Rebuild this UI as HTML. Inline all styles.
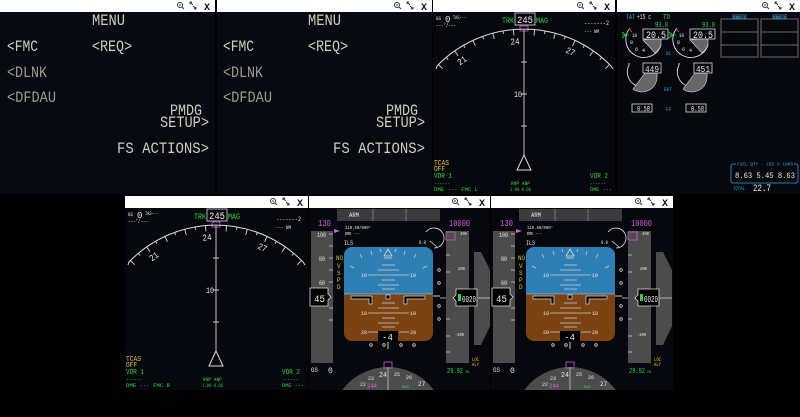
<!DOCTYPE html>
<html><head><meta charset="utf-8"><style>
html,body{margin:0;padding:0;background:#000;width:800px;height:417px;overflow:hidden}
svg{display:block;position:absolute;left:0;top:0}
text{font-family:"Liberation Mono","DejaVu Sans Mono",monospace}
.m{fill:#cfcdbc;font-size:16px}
.d{fill:#9d9b8e;font-size:16px}
.w{fill:#e8e8e8}
.g{fill:#2fd24a}
.y{fill:#e6c21e}
.c{fill:#2aa6d8}
.p{fill:#d060d8}
</style></head><body>
<svg width="800" height="417" viewBox="0 0 800 417" xmlns="http://www.w3.org/2000/svg">
<rect width="800" height="417" fill="#000"/>

<rect x="0" y="12" width="215" height="182" fill="#070911"/>
<rect x="217" y="12" width="215" height="182" fill="#070911"/>
<rect x="433" y="12" width="182" height="182" fill="#06080d"/>
<rect x="617" y="12" width="183" height="182" fill="#06080d"/>

<rect x="0" y="0" width="215" height="12" fill="#fff"/>
<rect x="217" y="0" width="215" height="12" fill="#fff"/>
<rect x="433" y="0" width="182" height="12" fill="#fff"/>
<rect x="617" y="0" width="183" height="12" fill="#fff"/>
<rect x="125" y="196" width="183" height="12" fill="#fff"/>
<rect x="309" y="196" width="181" height="12" fill="#fff"/>
<rect x="491" y="196" width="182" height="12" fill="#fff"/>

<g fill="none" stroke="#333" stroke-width="1">
 <circle cx="180" cy="5" r="2.5"/><line x1="182" y1="7" x2="184" y2="9"/><line x1="179" y1="5" x2="181" y2="5"/>
 <path d="M190,2 L193,5 M190,2 L190,4 M190,2 L192,2 M196,9 L193,6 M196,9 L196,7 M196,9 L194,9"/>
 <circle cx="397" cy="5" r="2.5"/><line x1="399" y1="7" x2="401" y2="9"/><line x1="396" y1="5" x2="398" y2="5"/>
 <path d="M407,2 L410,5 M407,2 L407,4 M407,2 L409,2 M413,9 L410,6 M413,9 L413,7 M413,9 L411,9"/>
 <circle cx="580" cy="5" r="2.5"/><line x1="582" y1="7" x2="584" y2="9"/><line x1="579" y1="5" x2="581" y2="5"/>
 <path d="M590,2 L593,5 M590,2 L590,4 M590,2 L592,2 M596,9 L593,6 M596,9 L596,7 M596,9 L594,9"/>
 <circle cx="765" cy="5" r="2.5"/><line x1="767" y1="7" x2="769" y2="9"/><line x1="764" y1="5" x2="766" y2="5"/>
 <path d="M775,2 L778,5 M775,2 L775,4 M775,2 L777,2 M781,9 L778,6 M781,9 L781,7 M781,9 L779,9"/>
 <circle cx="273" cy="201" r="2.5"/><line x1="275" y1="203" x2="277" y2="205"/><line x1="272" y1="201" x2="274" y2="201"/>
 <path d="M283,198 L286,201 M283,198 L283,200 M283,198 L285,198 M289,205 L286,202 M289,205 L289,203 M289,205 L287,205"/>
 <circle cx="455" cy="201" r="2.5"/><line x1="457" y1="203" x2="459" y2="205"/><line x1="454" y1="201" x2="456" y2="201"/>
 <path d="M465,198 L468,201 M465,198 L465,200 M465,198 L467,198 M471,205 L468,202 M471,205 L471,203 M471,205 L469,205"/>
 <circle cx="638" cy="201" r="2.5"/><line x1="640" y1="203" x2="642" y2="205"/><line x1="637" y1="201" x2="639" y2="201"/>
 <path d="M648,198 L651,201 M648,198 L648,200 M648,198 L650,198 M654,205 L651,202 M654,205 L654,203 M654,205 L652,205"/>
</g>
<g fill="#111" font-weight="bold" font-size="10" style="font-family:'Liberation Sans',sans-serif">
 <text x="204" y="10">X</text><text x="421" y="10">X</text><text x="604" y="10">X</text><text x="789" y="10">X</text>
 <text x="297" y="206">X</text><text x="479" y="206">X</text><text x="662" y="206">X</text>
</g>

<!-- MENU panels -->
<g>
 <text class="m" x="92" y="25" textLength="33" lengthAdjust="spacingAndGlyphs">MENU</text>
 <text class="m" x="7" y="51" textLength="31" lengthAdjust="spacingAndGlyphs">&lt;FMC</text>
 <text class="m" x="92" y="51" textLength="40" lengthAdjust="spacingAndGlyphs">&lt;REQ&gt;</text>
 <text class="d" x="7" y="77" textLength="40" lengthAdjust="spacingAndGlyphs">&lt;DLNK</text>
 <text class="d" x="7" y="102" textLength="49" lengthAdjust="spacingAndGlyphs">&lt;DFDAU</text>
 <text class="m" x="170" y="115" font-size="11" textLength="32" lengthAdjust="spacingAndGlyphs">PMDG</text>
 <text class="m" x="160" y="127" textLength="49" lengthAdjust="spacingAndGlyphs">SETUP&gt;</text>
 <text class="m" x="117" y="153" textLength="92" lengthAdjust="spacingAndGlyphs">FS ACTIONS&gt;</text>
</g>
<g>
 <text class="m" x="308" y="25" textLength="33" lengthAdjust="spacingAndGlyphs">MENU</text>
 <text class="m" x="223" y="51" textLength="31" lengthAdjust="spacingAndGlyphs">&lt;FMC</text>
 <text class="m" x="308" y="51" textLength="40" lengthAdjust="spacingAndGlyphs">&lt;REQ&gt;</text>
 <text class="d" x="223" y="77" textLength="40" lengthAdjust="spacingAndGlyphs">&lt;DLNK</text>
 <text class="d" x="223" y="102" textLength="49" lengthAdjust="spacingAndGlyphs">&lt;DFDAU</text>
 <text class="m" x="386" y="115" font-size="11" textLength="32" lengthAdjust="spacingAndGlyphs">PMDG</text>
 <text class="m" x="376" y="127" textLength="49" lengthAdjust="spacingAndGlyphs">SETUP&gt;</text>
 <text class="m" x="333" y="153" textLength="92" lengthAdjust="spacingAndGlyphs">FS ACTIONS&gt;</text>
</g>

<!-- ND top -->
<g>
 <text class="w" x="436" y="20" font-size="5" textLength="5" lengthAdjust="spacingAndGlyphs">GS</text>
 <text class="w" x="445" y="22" font-size="9">0</text>
 <text class="w" x="453" y="19" font-size="5" textLength="13" lengthAdjust="spacingAndGlyphs">TAS---</text>
 <text class="w" x="436" y="27" font-size="6" textLength="20" lengthAdjust="spacingAndGlyphs">---°/---</text>
 <text class="g" x="502" y="23" font-size="8" textLength="12" lengthAdjust="spacingAndGlyphs">TRK</text>
 <rect x="515" y="13" width="20" height="12" fill="none" stroke="#ddd" stroke-width="0.8"/>
 <text class="w" x="517" y="23" font-size="10" textLength="16" lengthAdjust="spacingAndGlyphs">245</text>
 <text class="g" x="536" y="23" font-size="8" textLength="12" lengthAdjust="spacingAndGlyphs">MAG</text>
 <rect x="520" y="26" width="8" height="5" fill="none" stroke="#c050d0" stroke-width="0.8"/>
 <text class="w" x="584" y="25" font-size="6" textLength="25" lengthAdjust="spacingAndGlyphs">-------2</text>
 <text class="w" x="584" y="33" font-size="5" textLength="15" lengthAdjust="spacingAndGlyphs">--- NM</text>
 <path d="M436,69 L437,66 A121,121 0 0 1 611,66 L613,69" fill="none" stroke="#ddd" stroke-width="1"/>
 <g stroke="#ddd" stroke-width="0.9">
  <line x1="524" y1="29" x2="524" y2="35" transform="rotate(-45 524 150)"/>
  <line x1="524" y1="29" x2="524" y2="32" transform="rotate(-40 524 150)"/>
  <line x1="524" y1="29" x2="524" y2="35" transform="rotate(-35 524 150)"/>
  <line x1="524" y1="29" x2="524" y2="32" transform="rotate(-30 524 150)"/>
  <line x1="524" y1="29" x2="524" y2="35" transform="rotate(-25 524 150)"/>
  <line x1="524" y1="29" x2="524" y2="32" transform="rotate(-20 524 150)"/>
  <line x1="524" y1="29" x2="524" y2="35" transform="rotate(-15 524 150)"/>
  <line x1="524" y1="29" x2="524" y2="32" transform="rotate(-10 524 150)"/>
  <line x1="524" y1="29" x2="524" y2="35" transform="rotate(-5 524 150)"/>
  <line x1="524" y1="29" x2="524" y2="35" transform="rotate(5 524 150)"/>
  <line x1="524" y1="29" x2="524" y2="32" transform="rotate(10 524 150)"/>
  <line x1="524" y1="29" x2="524" y2="35" transform="rotate(15 524 150)"/>
  <line x1="524" y1="29" x2="524" y2="32" transform="rotate(20 524 150)"/>
  <line x1="524" y1="29" x2="524" y2="35" transform="rotate(25 524 150)"/>
  <line x1="524" y1="29" x2="524" y2="32" transform="rotate(30 524 150)"/>
  <line x1="524" y1="29" x2="524" y2="35" transform="rotate(35 524 150)"/>
  <line x1="524" y1="29" x2="524" y2="32" transform="rotate(40 524 150)"/>
  <line x1="524" y1="29" x2="524" y2="35" transform="rotate(45 524 150)"/>
 </g>
 <text class="w" x="520" y="44" font-size="9" textLength="9" lengthAdjust="spacingAndGlyphs" transform="rotate(-5 524 150)">24</text>
 <text class="w" x="520" y="44" font-size="9" textLength="9" lengthAdjust="spacingAndGlyphs" transform="rotate(-35 524 150)">21</text>
 <text class="w" x="520" y="44" font-size="9" textLength="9" lengthAdjust="spacingAndGlyphs" transform="rotate(25 524 150)">27</text>
 <line x1="524" y1="30" x2="524" y2="156" stroke="#c8b8c8" stroke-width="1"/>
 <line x1="521" y1="62" x2="527" y2="62" stroke="#ccc"/>
 <line x1="521" y1="94" x2="527" y2="94" stroke="#ccc"/>
 <line x1="521" y1="126" x2="527" y2="126" stroke="#ccc"/>
 <text class="w" x="514" y="97" font-size="8" textLength="8" lengthAdjust="spacingAndGlyphs">10</text>
 <path d="M524,155 L517,170 L531,170 Z" fill="none" stroke="#ddd" stroke-width="1"/>
 <text class="y" x="434" y="165" font-size="7" textLength="15" lengthAdjust="spacingAndGlyphs">TCAS</text>
 <text class="y" x="434" y="171" font-size="7" textLength="11" lengthAdjust="spacingAndGlyphs">OFF</text>
 <text class="g" x="434" y="178" font-size="7" textLength="18" lengthAdjust="spacingAndGlyphs">VOR 1</text>
 <text class="g" x="434" y="185" font-size="5" textLength="16" lengthAdjust="spacingAndGlyphs">------</text>
 <text class="g" x="434" y="191" font-size="5" textLength="44" lengthAdjust="spacingAndGlyphs">DME ---  FMC L</text>
 <text class="g" x="511" y="185" font-size="5" textLength="19" lengthAdjust="spacingAndGlyphs">RNP  ANP</text>
 <text class="g" x="510" y="191" font-size="5" textLength="21" lengthAdjust="spacingAndGlyphs">1.00  0.06</text>
 <text class="g" x="590" y="178" font-size="7" textLength="18" lengthAdjust="spacingAndGlyphs">VOR 2</text>
 <text class="g" x="590" y="185" font-size="5" textLength="16" lengthAdjust="spacingAndGlyphs">------</text>
 <text class="g" x="590" y="191" font-size="5" textLength="22" lengthAdjust="spacingAndGlyphs">DME ---</text>
</g>

<!-- ND bottom -->
<rect x="125" y="208" width="183" height="182" fill="#06080d"/>
<g transform="translate(-308,196)">
 <text class="w" x="436" y="20" font-size="5" textLength="5" lengthAdjust="spacingAndGlyphs">GS</text>
 <text class="w" x="445" y="22" font-size="9">0</text>
 <text class="w" x="453" y="19" font-size="5" textLength="13" lengthAdjust="spacingAndGlyphs">TAS---</text>
 <text class="w" x="436" y="27" font-size="6" textLength="20" lengthAdjust="spacingAndGlyphs">---°/---</text>
 <text class="g" x="502" y="23" font-size="8" textLength="12" lengthAdjust="spacingAndGlyphs">TRK</text>
 <rect x="515" y="13" width="20" height="12" fill="none" stroke="#ddd" stroke-width="0.8"/>
 <text class="w" x="517" y="23" font-size="10" textLength="16" lengthAdjust="spacingAndGlyphs">245</text>
 <text class="g" x="536" y="23" font-size="8" textLength="12" lengthAdjust="spacingAndGlyphs">MAG</text>
 <rect x="520" y="26" width="8" height="5" fill="none" stroke="#c050d0" stroke-width="0.8"/>
 <text class="w" x="584" y="25" font-size="6" textLength="25" lengthAdjust="spacingAndGlyphs">-------2</text>
 <text class="w" x="584" y="33" font-size="5" textLength="15" lengthAdjust="spacingAndGlyphs">--- NM</text>
 <path d="M436,69 L437,66 A121,121 0 0 1 611,66 L613,69" fill="none" stroke="#ddd" stroke-width="1"/>
 <g stroke="#ddd" stroke-width="0.9">
  <line x1="524" y1="29" x2="524" y2="35" transform="rotate(-45 524 150)"/>
  <line x1="524" y1="29" x2="524" y2="32" transform="rotate(-40 524 150)"/>
  <line x1="524" y1="29" x2="524" y2="35" transform="rotate(-35 524 150)"/>
  <line x1="524" y1="29" x2="524" y2="32" transform="rotate(-30 524 150)"/>
  <line x1="524" y1="29" x2="524" y2="35" transform="rotate(-25 524 150)"/>
  <line x1="524" y1="29" x2="524" y2="32" transform="rotate(-20 524 150)"/>
  <line x1="524" y1="29" x2="524" y2="35" transform="rotate(-15 524 150)"/>
  <line x1="524" y1="29" x2="524" y2="32" transform="rotate(-10 524 150)"/>
  <line x1="524" y1="29" x2="524" y2="35" transform="rotate(-5 524 150)"/>
  <line x1="524" y1="29" x2="524" y2="35" transform="rotate(5 524 150)"/>
  <line x1="524" y1="29" x2="524" y2="32" transform="rotate(10 524 150)"/>
  <line x1="524" y1="29" x2="524" y2="35" transform="rotate(15 524 150)"/>
  <line x1="524" y1="29" x2="524" y2="32" transform="rotate(20 524 150)"/>
  <line x1="524" y1="29" x2="524" y2="35" transform="rotate(25 524 150)"/>
  <line x1="524" y1="29" x2="524" y2="32" transform="rotate(30 524 150)"/>
  <line x1="524" y1="29" x2="524" y2="35" transform="rotate(35 524 150)"/>
  <line x1="524" y1="29" x2="524" y2="32" transform="rotate(40 524 150)"/>
  <line x1="524" y1="29" x2="524" y2="35" transform="rotate(45 524 150)"/>
 </g>
 <text class="w" x="520" y="44" font-size="9" textLength="9" lengthAdjust="spacingAndGlyphs" transform="rotate(-5 524 150)">24</text>
 <text class="w" x="520" y="44" font-size="9" textLength="9" lengthAdjust="spacingAndGlyphs" transform="rotate(-35 524 150)">21</text>
 <text class="w" x="520" y="44" font-size="9" textLength="9" lengthAdjust="spacingAndGlyphs" transform="rotate(25 524 150)">27</text>
 <line x1="524" y1="30" x2="524" y2="156" stroke="#c8b8c8" stroke-width="1"/>
 <line x1="521" y1="62" x2="527" y2="62" stroke="#ccc"/>
 <line x1="521" y1="94" x2="527" y2="94" stroke="#ccc"/>
 <line x1="521" y1="126" x2="527" y2="126" stroke="#ccc"/>
 <text class="w" x="514" y="97" font-size="8" textLength="8" lengthAdjust="spacingAndGlyphs">10</text>
 <path d="M524,155 L517,170 L531,170 Z" fill="none" stroke="#ddd" stroke-width="1"/>
 <text class="y" x="434" y="165" font-size="7" textLength="15" lengthAdjust="spacingAndGlyphs">TCAS</text>
 <text class="y" x="434" y="171" font-size="7" textLength="11" lengthAdjust="spacingAndGlyphs">OFF</text>
 <text class="g" x="434" y="178" font-size="7" textLength="18" lengthAdjust="spacingAndGlyphs">VOR 1</text>
 <text class="g" x="434" y="185" font-size="5" textLength="16" lengthAdjust="spacingAndGlyphs">------</text>
 <text class="g" x="434" y="191" font-size="5" textLength="44" lengthAdjust="spacingAndGlyphs">DME ---  FMC R</text>
 <text class="g" x="511" y="185" font-size="5" textLength="19" lengthAdjust="spacingAndGlyphs">RNP  ANP</text>
 <text class="g" x="510" y="191" font-size="5" textLength="21" lengthAdjust="spacingAndGlyphs">1.00  0.06</text>
 <text class="g" x="590" y="178" font-size="7" textLength="18" lengthAdjust="spacingAndGlyphs">VOR 2</text>
 <text class="g" x="590" y="185" font-size="5" textLength="16" lengthAdjust="spacingAndGlyphs">------</text>
 <text class="g" x="590" y="191" font-size="5" textLength="22" lengthAdjust="spacingAndGlyphs">DME ---</text>
</g>

<!-- EICAS -->
<g>
 <text class="c" x="626" y="19" font-size="6" textLength="9" lengthAdjust="spacingAndGlyphs">TAT</text>
 <text class="w" x="637" y="19" font-size="7" textLength="14" lengthAdjust="spacingAndGlyphs">+15 c</text>
 <text class="g" x="663" y="19" font-size="7" textLength="7" lengthAdjust="spacingAndGlyphs">TO</text>
 <g fill="none" stroke="#ddd" stroke-width="0.9">
  <path d="M630,28 A18,18 0 1 0 661,45"/>
  <path d="M677,28 A18,18 0 1 0 708,45"/>
 </g>
 <path d="M643,40 L661,38 L661,45 A18,18 0 0 1 655,53 Z" fill="#666" stroke="#ddd" stroke-width="0.6"/>
 <path d="M690,40 L708,38 L708,45 A18,18 0 0 1 702,53 Z" fill="#666" stroke="#ddd" stroke-width="0.6"/>
 <rect x="643" y="29" width="25" height="10" fill="#06080d" stroke="#ddd" stroke-width="0.8"/>
 <rect x="690" y="29" width="25" height="10" fill="#06080d" stroke="#ddd" stroke-width="0.8"/>
 <text class="w" x="646" y="38" font-size="10" textLength="20" lengthAdjust="spacingAndGlyphs">20.5</text>
 <text class="w" x="693" y="38" font-size="10" textLength="20" lengthAdjust="spacingAndGlyphs">20.5</text>
 <text class="g" x="655" y="27" font-size="7" textLength="13" lengthAdjust="spacingAndGlyphs">93.8</text>
 <text class="g" x="702" y="27" font-size="7" textLength="13" lengthAdjust="spacingAndGlyphs">93.8</text>
 <path d="M622,35 L629,35 M622,32 L626,35 L622,38" stroke="#2fd24a" fill="none" stroke-width="0.8"/>
 <path d="M669,35 L676,35 M669,32 L673,35 L669,38" stroke="#2fd24a" fill="none" stroke-width="0.8"/>
 <line x1="629" y1="29" x2="632" y2="32" stroke="#e03030" stroke-width="1"/>
 <line x1="676" y1="29" x2="679" y2="32" stroke="#e03030" stroke-width="1"/>
 <text class="w" x="632" y="37" font-size="5" textLength="5" lengthAdjust="spacingAndGlyphs">10</text>
 <text class="w" x="679" y="37" font-size="5" textLength="5" lengthAdjust="spacingAndGlyphs">10</text>
 <text class="w" x="630" y="44" font-size="5">8</text><text class="w" x="677" y="44" font-size="5">8</text>
 <text class="w" x="635" y="51" font-size="5">6</text><text class="w" x="642" y="52" font-size="5">4</text>
 <text class="w" x="682" y="51" font-size="5">6</text><text class="w" x="689" y="52" font-size="5">4</text>
 <text class="c" x="666" y="55" font-size="5" textLength="5" lengthAdjust="spacingAndGlyphs">N1</text>
 <g fill="none" stroke="#ddd" stroke-width="0.9">
  <path d="M629,65 A15,15 0 1 0 657,75"/>
  <path d="M679,65 A15,15 0 1 0 707,75"/>
 </g>
 <path d="M633,89 L645,73 L657,73 L657,77 A15,15 0 0 1 633,89 Z" fill="#666" stroke="#ddd" stroke-width="0.6"/>
 <path d="M683,89 L695,73 L707,73 L707,77 A15,15 0 0 1 683,89 Z" fill="#666" stroke="#ddd" stroke-width="0.6"/>
 <rect x="643" y="63" width="18" height="10" fill="#06080d" stroke="#ddd" stroke-width="0.8"/>
 <rect x="694" y="63" width="18" height="10" fill="#06080d" stroke="#ddd" stroke-width="0.8"/>
 <text class="w" x="645" y="72" font-size="9" textLength="14" lengthAdjust="spacingAndGlyphs">449</text>
 <text class="w" x="696" y="72" font-size="9" textLength="14" lengthAdjust="spacingAndGlyphs">451</text>
 <circle cx="629" cy="64" r="1" fill="#e08020"/><circle cx="679" cy="64" r="1" fill="#e08020"/>
 <text class="c" x="664" y="91" font-size="5" textLength="8" lengthAdjust="spacingAndGlyphs">EGT</text>
 <rect x="632" y="104" width="20" height="8" fill="none" stroke="#ddd" stroke-width="0.8"/>
 <rect x="686" y="104" width="20" height="8" fill="none" stroke="#ddd" stroke-width="0.8"/>
 <text class="w" x="637" y="111" font-size="7" textLength="13" lengthAdjust="spacingAndGlyphs">0.58</text>
 <text class="w" x="691" y="111" font-size="7" textLength="13" lengthAdjust="spacingAndGlyphs">0.58</text>
 <text class="c" x="666" y="111" font-size="5" textLength="5" lengthAdjust="spacingAndGlyphs">FF</text>
 <rect x="732" y="14" width="15" height="5" fill="#1a3a55"/>
 <rect x="772" y="14" width="15" height="5" fill="#1a3a55"/>
 <text class="c" x="733" y="18.5" font-size="4" textLength="13" lengthAdjust="spacingAndGlyphs">ENG 1</text>
 <text class="c" x="773" y="18.5" font-size="4" textLength="13" lengthAdjust="spacingAndGlyphs">ENG 2</text>
 <g fill="none" stroke="#888" stroke-width="0.8">
  <rect x="721" y="19" width="37" height="38"/><line x1="721" y1="32" x2="758" y2="32"/><line x1="721" y1="45" x2="758" y2="45"/>
  <rect x="761" y="19" width="37" height="38"/><line x1="761" y1="32" x2="798" y2="32"/><line x1="761" y1="45" x2="798" y2="45"/>
 </g>
 <rect x="731" y="164" width="67" height="19" rx="2" fill="none" stroke="#2aa6d8" stroke-width="0.8"/>
 <rect x="736" y="161" width="58" height="5" fill="#06080d"/>
 <text class="c" x="737" y="165.5" font-size="4.5" textLength="56" lengthAdjust="spacingAndGlyphs">FUEL QTY - LBS X 1000</text>
 <text class="w" x="735" y="178" font-size="8" textLength="60" lengthAdjust="spacingAndGlyphs">8.63  5.45  8.63</text>
 <text class="c" x="733" y="190" font-size="5" textLength="12" lengthAdjust="spacingAndGlyphs">TOTAL</text>
 <text class="w" x="753" y="191" font-size="10" textLength="18" lengthAdjust="spacingAndGlyphs">22.7</text>
</g>

<!-- PFD 1 -->
<rect x="309" y="208" width="181" height="182" fill="#06080d"/>
<g>
 <rect x="337" y="209" width="103" height="12" fill="#3c3c3c"/>
 <line x1="373" y1="209" x2="373" y2="221" stroke="#999" stroke-width="0.6"/>
 <line x1="406" y1="209" x2="406" y2="221" stroke="#999" stroke-width="0.6"/>
 <text class="w" x="349" y="217" font-size="6" textLength="10" lengthAdjust="spacingAndGlyphs">ARM</text>
 <text class="p" x="318" y="226" font-size="9" textLength="13" lengthAdjust="spacingAndGlyphs">130</text>
 <rect x="311" y="231" width="22" height="132" fill="#4c4c4c"/>
 <g stroke="#ccc" stroke-width="0.8">
  <line x1="329" y1="234" x2="333" y2="234"/><line x1="329" y1="246" x2="333" y2="246"/>
  <line x1="329" y1="258" x2="333" y2="258"/><line x1="329" y1="270" x2="333" y2="270"/>
  <line x1="329" y1="282" x2="333" y2="282"/><line x1="329" y1="308" x2="333" y2="308"/>
  <line x1="329" y1="320" x2="333" y2="320"/>
 </g>
 <text class="w" x="317" y="237" font-size="6" textLength="9" lengthAdjust="spacingAndGlyphs">100</text>
 <text class="w" x="319" y="261" font-size="6" textLength="6" lengthAdjust="spacingAndGlyphs">80</text>
 <text class="w" x="319" y="285" font-size="6" textLength="6" lengthAdjust="spacingAndGlyphs">60</text>
 <path d="M334,229 L340,231 L334,233 Z" fill="#d060d8"/>
 <path d="M310,288 L328,288 L328,294 L331,297 L328,300 L328,306 L310,306 Z" fill="#000" stroke="#ddd" stroke-width="0.8"/>
 <text class="w" x="314" y="302" font-size="10" textLength="11" lengthAdjust="spacingAndGlyphs">45</text>
 <text class="y" x="336" y="260" font-size="6" textLength="7" lengthAdjust="spacingAndGlyphs">NO</text>
 <text class="y" x="337" y="268" font-size="6">V</text>
 <text class="y" x="337" y="275" font-size="6">S</text>
 <text class="y" x="337" y="282" font-size="6">P</text>
 <text class="y" x="337" y="289" font-size="6">D</text>
 <text class="w" x="345" y="229" font-size="4.5" textLength="26" lengthAdjust="spacingAndGlyphs">110.50/000°</text>
 <text class="w" x="345" y="235" font-size="4.5" textLength="15" lengthAdjust="spacingAndGlyphs">DME ---</text>
 <text class="w" x="344" y="245" font-size="6" textLength="9" lengthAdjust="spacingAndGlyphs">ILS</text>
 <path d="M426,232 A10,10 0 1 1 434,248" fill="none" stroke="#ddd" stroke-width="0.8"/>
 <line x1="430" y1="241" x2="437" y2="247" stroke="#ddd" stroke-width="0.8"/>
 <text class="w" x="419" y="244" font-size="5" textLength="7" lengthAdjust="spacingAndGlyphs">0.0</text>
 <clipPath id="att1"><rect x="344" y="247" width="89" height="94" rx="8"/></clipPath>
 <g clip-path="url(#att1)">
  <rect x="344" y="247" width="89" height="47" fill="#2e7fb4"/>
  <rect x="344" y="294" width="89" height="47" fill="#7b4212"/>
  <line x1="344" y1="294" x2="433" y2="294" stroke="#ccc" stroke-width="0.6"/>
 </g>
 <g stroke="#ccc" stroke-width="0.8">
  <line x1="368" y1="275" x2="409" y2="275"/>
  <line x1="382" y1="265" x2="395" y2="265"/><line x1="378" y1="270" x2="399" y2="270"/>
  <line x1="382" y1="280" x2="395" y2="280"/><line x1="378" y1="285" x2="399" y2="285"/>
  <line x1="382" y1="289" x2="395" y2="289"/>
  <line x1="382" y1="303" x2="395" y2="303"/><line x1="378" y1="308" x2="399" y2="308"/>
  <line x1="368" y1="313" x2="409" y2="313"/>
  <line x1="382" y1="318" x2="395" y2="318"/><line x1="378" y1="323" x2="399" y2="323"/>
  <line x1="382" y1="327" x2="395" y2="327"/>
  <line x1="368" y1="332" x2="378" y2="332"/><line x1="399" y1="332" x2="409" y2="332"/>
  <line x1="360" y1="254" x2="362" y2="258"/><line x1="371" y1="251" x2="372" y2="255"/>
  <line x1="380" y1="249" x2="381" y2="252"/><line x1="396" y1="249" x2="395" y2="252"/>
  <line x1="405" y1="251" x2="404" y2="255"/><line x1="416" y1="254" x2="414" y2="258"/>
  <line x1="350" y1="266" x2="354" y2="268"/><line x1="427" y1="266" x2="423" y2="268"/>
 </g>
 <path d="M384,256 L392,256 L388,249 Z M384,258 L392,258" fill="none" stroke="#ddd" stroke-width="0.8"/>
 <text class="w" x="361" y="277" font-size="5">10</text><text class="w" x="410" y="277" font-size="5">10</text>
 <text class="w" x="361" y="315" font-size="5">10</text><text class="w" x="410" y="315" font-size="5">10</text>
 <text class="w" x="361" y="334" font-size="5">20</text><text class="w" x="410" y="334" font-size="5">20</text>
 <path d="M351,296 L372,296 L372,304 L369,304 L369,299 L351,299 Z" fill="#000" stroke="#ddd" stroke-width="0.7"/>
 <path d="M425,296 L404,296 L404,304 L407,304 L407,299 L425,299 Z" fill="#000" stroke="#ddd" stroke-width="0.7"/>
 <rect x="386" y="295" width="4" height="4" fill="#000" stroke="#ddd" stroke-width="0.7"/>
 <rect x="378" y="331" width="20" height="11" fill="#000"/>
 <text class="w" x="382" y="340" font-size="9" textLength="11" lengthAdjust="spacingAndGlyphs">-4</text>
 <g fill="none" stroke="#ccc" stroke-width="0.8">
  <circle cx="439" cy="270" r="1.3"/><circle cx="439" cy="283" r="1.3"/><circle cx="439" cy="306" r="1.3"/><circle cx="439" cy="319" r="1.3"/>
  <circle cx="371" cy="345" r="1.3"/><circle cx="384" cy="345" r="1.3"/><circle cx="401" cy="345" r="1.3"/><circle cx="414" cy="345" r="1.3"/>
 </g>
 <line x1="388" y1="342" x2="388" y2="349" stroke="#ccc"/>
 <line x1="433" y1="296" x2="440" y2="296" stroke="#ccc"/>
 <text class="p" x="449" y="226" font-size="9" textLength="21" lengthAdjust="spacingAndGlyphs">10000</text>
 <rect x="446" y="231" width="23" height="132" fill="#4c4c4c"/>
 <path d="M446,232 L455,232 L455,240 L446,240 Z" fill="none" stroke="#d060d8" stroke-width="0.8"/>
 <g stroke="#ccc" stroke-width="0.8">
  <line x1="446" y1="255" x2="450" y2="255"/><line x1="446" y1="272" x2="450" y2="272"/>
  <line x1="446" y1="319" x2="450" y2="319"/><line x1="446" y1="336" x2="450" y2="336"/>
  <line x1="446" y1="352" x2="450" y2="352"/><line x1="440" y1="298" x2="446" y2="298"/>
 </g>
 <text class="w" x="460" y="235" font-size="4.5" textLength="7" lengthAdjust="spacingAndGlyphs">400</text>
 <text class="w" x="458" y="270" font-size="4.5" textLength="7" lengthAdjust="spacingAndGlyphs">200</text>
 <text class="w" x="455" y="336" font-size="4.5" textLength="9" lengthAdjust="spacingAndGlyphs">-200</text>
 <path d="M474,252 L481,252 L490,270 L490,326 L481,345 L474,345 Z" fill="#4c4c4c"/>
 <line x1="478" y1="298" x2="490" y2="298" stroke="#ccc" stroke-width="0.8"/>
 <path d="M456,289 L477,289 L477,306 L456,306 L456,301 L453,298 L456,295 Z" fill="#000" stroke="#ddd" stroke-width="0.8"/>
 <rect x="458" y="294" width="3" height="7" fill="#2fd24a"/>
 <text class="w" x="462" y="302" font-size="9" textLength="14" lengthAdjust="spacingAndGlyphs">0020</text>
 <text class="y" x="472" y="361" font-size="5" textLength="7" lengthAdjust="spacingAndGlyphs">LOC</text>
 <text class="y" x="472" y="366" font-size="5" textLength="7" lengthAdjust="spacingAndGlyphs">ALY</text>
 <text class="w" x="311" y="372" font-size="6" textLength="7" lengthAdjust="spacingAndGlyphs">GS</text>
 <text class="w" x="328" y="373" font-size="8">0</text>
 <text class="g" x="447" y="373" font-size="7" textLength="16" lengthAdjust="spacingAndGlyphs">29.92</text>
 <text class="g" x="465" y="373" font-size="4" textLength="6" lengthAdjust="spacingAndGlyphs">IN.</text>
 <clipPath id="cmp1"><rect x="309" y="360" width="181" height="30"/></clipPath>
 <circle cx="388" cy="424" r="57" fill="#4c4c4c" clip-path="url(#cmp1)"/>
 <line x1="388" y1="367" x2="388" y2="390" stroke="#ccc" stroke-width="0.8"/>
 <rect x="384" y="362" width="8" height="6" fill="none" stroke="#d060d8" stroke-width="0.8"/>
 <text class="w" x="379" y="377" font-size="7" textLength="8" lengthAdjust="spacingAndGlyphs">24</text>
 <text class="w" x="394" y="376" font-size="5">25</text>
 <text class="w" x="406" y="379" font-size="5">26</text>
 <text class="w" x="418" y="386" font-size="6">27</text>
 <text class="w" x="360" y="386" font-size="5">22</text>
 <text class="w" x="368" y="380" font-size="5">23</text>
 <text class="p" x="367" y="388" font-size="6" textLength="10" lengthAdjust="spacingAndGlyphs">244</text>
 <text class="g" x="402" y="388" font-size="4" textLength="7" lengthAdjust="spacingAndGlyphs">MAG</text>
</g>

<!-- PFD 2 -->
<rect x="491" y="208" width="182" height="182" fill="#06080d"/>
<g transform="translate(182,0)">
 <rect x="337" y="209" width="103" height="12" fill="#3c3c3c"/>
 <line x1="373" y1="209" x2="373" y2="221" stroke="#999" stroke-width="0.6"/>
 <line x1="406" y1="209" x2="406" y2="221" stroke="#999" stroke-width="0.6"/>
 <text class="w" x="349" y="217" font-size="6" textLength="10" lengthAdjust="spacingAndGlyphs">ARM</text>
 <text class="p" x="318" y="226" font-size="9" textLength="13" lengthAdjust="spacingAndGlyphs">130</text>
 <rect x="311" y="231" width="22" height="132" fill="#4c4c4c"/>
 <g stroke="#ccc" stroke-width="0.8">
  <line x1="329" y1="234" x2="333" y2="234"/><line x1="329" y1="246" x2="333" y2="246"/>
  <line x1="329" y1="258" x2="333" y2="258"/><line x1="329" y1="270" x2="333" y2="270"/>
  <line x1="329" y1="282" x2="333" y2="282"/><line x1="329" y1="308" x2="333" y2="308"/>
  <line x1="329" y1="320" x2="333" y2="320"/>
 </g>
 <text class="w" x="317" y="237" font-size="6" textLength="9" lengthAdjust="spacingAndGlyphs">100</text>
 <text class="w" x="319" y="261" font-size="6" textLength="6" lengthAdjust="spacingAndGlyphs">80</text>
 <text class="w" x="319" y="285" font-size="6" textLength="6" lengthAdjust="spacingAndGlyphs">60</text>
 <path d="M334,229 L340,231 L334,233 Z" fill="#d060d8"/>
 <path d="M310,288 L328,288 L328,294 L331,297 L328,300 L328,306 L310,306 Z" fill="#000" stroke="#ddd" stroke-width="0.8"/>
 <text class="w" x="314" y="302" font-size="10" textLength="11" lengthAdjust="spacingAndGlyphs">45</text>
 <text class="y" x="336" y="260" font-size="6" textLength="7" lengthAdjust="spacingAndGlyphs">NO</text>
 <text class="y" x="337" y="268" font-size="6">V</text>
 <text class="y" x="337" y="275" font-size="6">S</text>
 <text class="y" x="337" y="282" font-size="6">P</text>
 <text class="y" x="337" y="289" font-size="6">D</text>
 <text class="w" x="345" y="229" font-size="4.5" textLength="26" lengthAdjust="spacingAndGlyphs">110.50/000°</text>
 <text class="w" x="345" y="235" font-size="4.5" textLength="15" lengthAdjust="spacingAndGlyphs">DME ---</text>
 <text class="w" x="344" y="245" font-size="6" textLength="9" lengthAdjust="spacingAndGlyphs">ILS</text>
 <path d="M426,232 A10,10 0 1 1 434,248" fill="none" stroke="#ddd" stroke-width="0.8"/>
 <line x1="430" y1="241" x2="437" y2="247" stroke="#ddd" stroke-width="0.8"/>
 <text class="w" x="419" y="244" font-size="5" textLength="7" lengthAdjust="spacingAndGlyphs">0.0</text>
 <clipPath id="att2"><rect x="344" y="247" width="89" height="94" rx="8"/></clipPath>
 <g clip-path="url(#att2)">
  <rect x="344" y="247" width="89" height="47" fill="#2e7fb4"/>
  <rect x="344" y="294" width="89" height="47" fill="#7b4212"/>
  <line x1="344" y1="294" x2="433" y2="294" stroke="#ccc" stroke-width="0.6"/>
 </g>
 <g stroke="#ccc" stroke-width="0.8">
  <line x1="368" y1="275" x2="409" y2="275"/>
  <line x1="382" y1="265" x2="395" y2="265"/><line x1="378" y1="270" x2="399" y2="270"/>
  <line x1="382" y1="280" x2="395" y2="280"/><line x1="378" y1="285" x2="399" y2="285"/>
  <line x1="382" y1="289" x2="395" y2="289"/>
  <line x1="382" y1="303" x2="395" y2="303"/><line x1="378" y1="308" x2="399" y2="308"/>
  <line x1="368" y1="313" x2="409" y2="313"/>
  <line x1="382" y1="318" x2="395" y2="318"/><line x1="378" y1="323" x2="399" y2="323"/>
  <line x1="382" y1="327" x2="395" y2="327"/>
  <line x1="368" y1="332" x2="378" y2="332"/><line x1="399" y1="332" x2="409" y2="332"/>
  <line x1="360" y1="254" x2="362" y2="258"/><line x1="371" y1="251" x2="372" y2="255"/>
  <line x1="380" y1="249" x2="381" y2="252"/><line x1="396" y1="249" x2="395" y2="252"/>
  <line x1="405" y1="251" x2="404" y2="255"/><line x1="416" y1="254" x2="414" y2="258"/>
  <line x1="350" y1="266" x2="354" y2="268"/><line x1="427" y1="266" x2="423" y2="268"/>
 </g>
 <path d="M384,256 L392,256 L388,249 Z M384,258 L392,258" fill="none" stroke="#ddd" stroke-width="0.8"/>
 <text class="w" x="361" y="277" font-size="5">10</text><text class="w" x="410" y="277" font-size="5">10</text>
 <text class="w" x="361" y="315" font-size="5">10</text><text class="w" x="410" y="315" font-size="5">10</text>
 <text class="w" x="361" y="334" font-size="5">20</text><text class="w" x="410" y="334" font-size="5">20</text>
 <path d="M351,296 L372,296 L372,304 L369,304 L369,299 L351,299 Z" fill="#000" stroke="#ddd" stroke-width="0.7"/>
 <path d="M425,296 L404,296 L404,304 L407,304 L407,299 L425,299 Z" fill="#000" stroke="#ddd" stroke-width="0.7"/>
 <rect x="386" y="295" width="4" height="4" fill="#000" stroke="#ddd" stroke-width="0.7"/>
 <rect x="378" y="331" width="20" height="11" fill="#000"/>
 <text class="w" x="382" y="340" font-size="9" textLength="11" lengthAdjust="spacingAndGlyphs">-4</text>
 <g fill="none" stroke="#ccc" stroke-width="0.8">
  <circle cx="439" cy="270" r="1.3"/><circle cx="439" cy="283" r="1.3"/><circle cx="439" cy="306" r="1.3"/><circle cx="439" cy="319" r="1.3"/>
  <circle cx="371" cy="345" r="1.3"/><circle cx="384" cy="345" r="1.3"/><circle cx="401" cy="345" r="1.3"/><circle cx="414" cy="345" r="1.3"/>
 </g>
 <line x1="388" y1="342" x2="388" y2="349" stroke="#ccc"/>
 <line x1="433" y1="296" x2="440" y2="296" stroke="#ccc"/>
 <text class="p" x="449" y="226" font-size="9" textLength="21" lengthAdjust="spacingAndGlyphs">10000</text>
 <rect x="446" y="231" width="23" height="132" fill="#4c4c4c"/>
 <path d="M446,232 L455,232 L455,240 L446,240 Z" fill="none" stroke="#d060d8" stroke-width="0.8"/>
 <g stroke="#ccc" stroke-width="0.8">
  <line x1="446" y1="255" x2="450" y2="255"/><line x1="446" y1="272" x2="450" y2="272"/>
  <line x1="446" y1="319" x2="450" y2="319"/><line x1="446" y1="336" x2="450" y2="336"/>
  <line x1="446" y1="352" x2="450" y2="352"/><line x1="440" y1="298" x2="446" y2="298"/>
 </g>
 <text class="w" x="460" y="235" font-size="4.5" textLength="7" lengthAdjust="spacingAndGlyphs">400</text>
 <text class="w" x="458" y="270" font-size="4.5" textLength="7" lengthAdjust="spacingAndGlyphs">200</text>
 <text class="w" x="455" y="336" font-size="4.5" textLength="9" lengthAdjust="spacingAndGlyphs">-200</text>
 <path d="M474,252 L481,252 L490,270 L490,326 L481,345 L474,345 Z" fill="#4c4c4c"/>
 <line x1="478" y1="298" x2="490" y2="298" stroke="#ccc" stroke-width="0.8"/>
 <path d="M456,289 L477,289 L477,306 L456,306 L456,301 L453,298 L456,295 Z" fill="#000" stroke="#ddd" stroke-width="0.8"/>
 <rect x="458" y="294" width="3" height="7" fill="#2fd24a"/>
 <text class="w" x="462" y="302" font-size="9" textLength="14" lengthAdjust="spacingAndGlyphs">0020</text>
 <text class="y" x="472" y="361" font-size="5" textLength="7" lengthAdjust="spacingAndGlyphs">LOC</text>
 <text class="y" x="472" y="366" font-size="5" textLength="7" lengthAdjust="spacingAndGlyphs">ALY</text>
 <text class="w" x="311" y="372" font-size="6" textLength="7" lengthAdjust="spacingAndGlyphs">GS</text>
 <text class="w" x="328" y="373" font-size="8">0</text>
 <text class="g" x="447" y="373" font-size="7" textLength="16" lengthAdjust="spacingAndGlyphs">29.92</text>
 <text class="g" x="465" y="373" font-size="4" textLength="6" lengthAdjust="spacingAndGlyphs">IN.</text>
 <clipPath id="cmp2"><rect x="309" y="360" width="181" height="30"/></clipPath>
 <circle cx="388" cy="424" r="57" fill="#4c4c4c" clip-path="url(#cmp2)"/>
 <line x1="388" y1="367" x2="388" y2="390" stroke="#ccc" stroke-width="0.8"/>
 <rect x="384" y="362" width="8" height="6" fill="none" stroke="#d060d8" stroke-width="0.8"/>
 <text class="w" x="379" y="377" font-size="7" textLength="8" lengthAdjust="spacingAndGlyphs">24</text>
 <text class="w" x="394" y="376" font-size="5">25</text>
 <text class="w" x="406" y="379" font-size="5">26</text>
 <text class="w" x="418" y="386" font-size="6">27</text>
 <text class="w" x="360" y="386" font-size="5">22</text>
 <text class="w" x="368" y="380" font-size="5">23</text>
 <text class="p" x="367" y="388" font-size="6" textLength="10" lengthAdjust="spacingAndGlyphs">244</text>
 <text class="g" x="402" y="388" font-size="4" textLength="7" lengthAdjust="spacingAndGlyphs">MAG</text>
</g>
</svg>
</body></html>
